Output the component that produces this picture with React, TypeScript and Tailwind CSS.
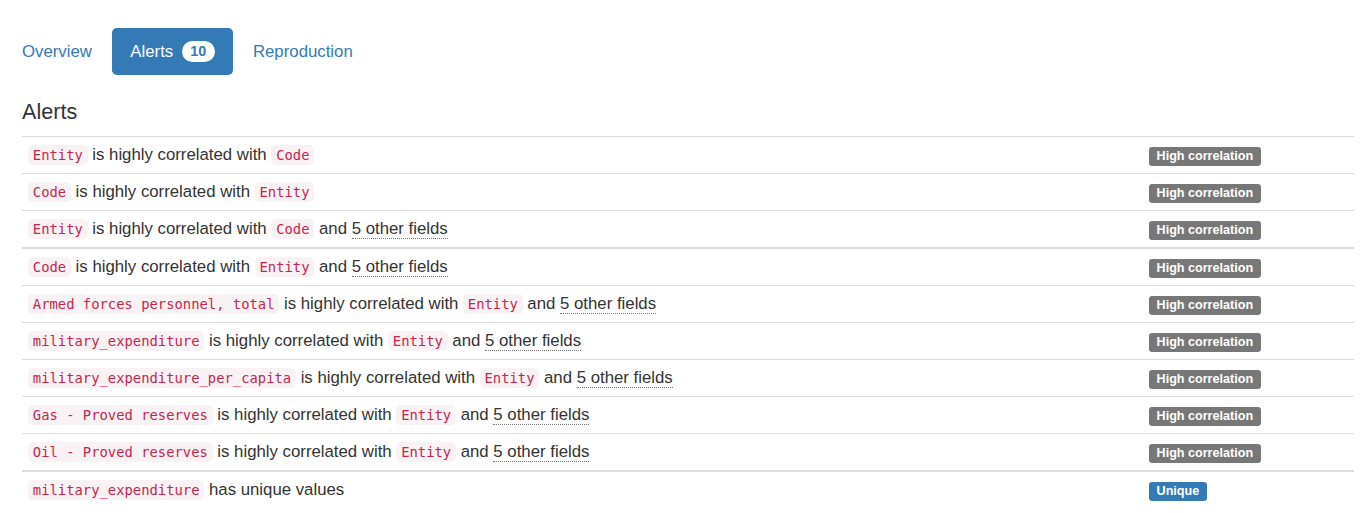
import React from 'react';

type Alert = {
  parts: React.ReactNode;
  kind: 'corr' | 'unique';
};

const Code: React.FC<{ children: React.ReactNode }> = ({ children }) => (
  <code className="rounded-[4.8px] bg-[#f9f2f4] px-[4.8px] py-[2.4px] font-['DejaVu_Sans_Mono',monospace] text-[13.85px] text-[#c7254e]">
    {children}
  </code>
);

const Others = () => (
  <abbr className="cursor-help border-b border-dotted border-[#777] no-underline">5 other fields</abbr>
);

const corr = (a: string, b: string, more: boolean): Alert => ({
  kind: 'corr',
  parts: (
    <>
      <Code>{a}</Code> is highly correlated with <Code>{b}</Code>
      {more && (
        <>
          {' '}and <Others />
        </>
      )}
    </>
  ),
});

const groups: Alert[][] = [
  [corr('Entity', 'Code', false), corr('Code', 'Entity', false), corr('Entity', 'Code', true)],
  [
    corr('Code', 'Entity', true),
    corr('Armed forces personnel, total', 'Entity', true),
    corr('military_expenditure', 'Entity', true),
    corr('military_expenditure_per_capita', 'Entity', true),
    corr('Gas - Proved reserves', 'Entity', true),
    corr('Oil - Proved reserves', 'Entity', true),
  ],
  [
    {
      kind: 'unique',
      parts: (
        <>
          <Code>military_expenditure</Code> has unique values
        </>
      ),
    },
  ],
];

const Label: React.FC<{ kind: Alert['kind'] }> = ({ kind }) => (
  <span
    className={
      'inline-block rounded-[3.15px] px-[7.56px] pt-[2.52px] pb-[3.78px] text-[12.6px] font-bold leading-none text-white ' +
      (kind === 'corr' ? 'bg-[#777]' : 'bg-[#337ab7]')
    }
  >
    {kind === 'corr' ? 'High correlation' : 'Unique'}
  </span>
);

export default function App() {
  return (
    <div className="min-h-screen bg-white pl-[4px] pr-[9px] font-['Liberation_Sans',Arial,sans-serif] text-[16.8px] leading-[24px] text-[#333]">
      <ul className="flex gap-[2.4px] pt-[28px]">
        <li>
          <a className="block rounded-[4.8px] px-[18px] py-[11.5px] text-[#337ab7]">Overview</a>
        </li>
        <li>
          <a className="flex items-center rounded-[4.8px] bg-[#337ab7] px-[18px] py-[11.5px] text-white">
            Alerts
            <span className="ml-[8.5px] rounded-[12px] bg-white px-[8.4px] py-[3.6px] text-[14.4px] font-bold leading-none text-[#337ab7]">
              10
            </span>
          </a>
        </li>
        <li>
          <a className="block rounded-[4.8px] px-[18px] py-[11.5px] text-[#337ab7]">Reproduction</a>
        </li>
      </ul>

      <div className="pl-[18px]">
        <h4 className="mt-[25px] mb-[12px] text-[21.6px] font-medium leading-[24px]">Alerts</h4>
        <table className="w-full border-collapse">
          {groups.map((rows, gi) => (
            <tbody key={gi} className={gi > 0 ? 'border-t-2 border-[#ddd]' : ''}>
              {rows.map((r, ri) => (
                <tr key={ri} className={ri > 0 || gi === 0 ? 'border-t border-[#ddd]' : ''}>
                  <td className="px-[6px] py-[6px] align-top">{r.parts}</td>
                  <td className="w-[211px] px-[6px] py-[6px] align-top">
                    <Label kind={r.kind} />
                  </td>
                </tr>
              ))}
            </tbody>
          ))}
        </table>
      </div>
    </div>
  );
}
